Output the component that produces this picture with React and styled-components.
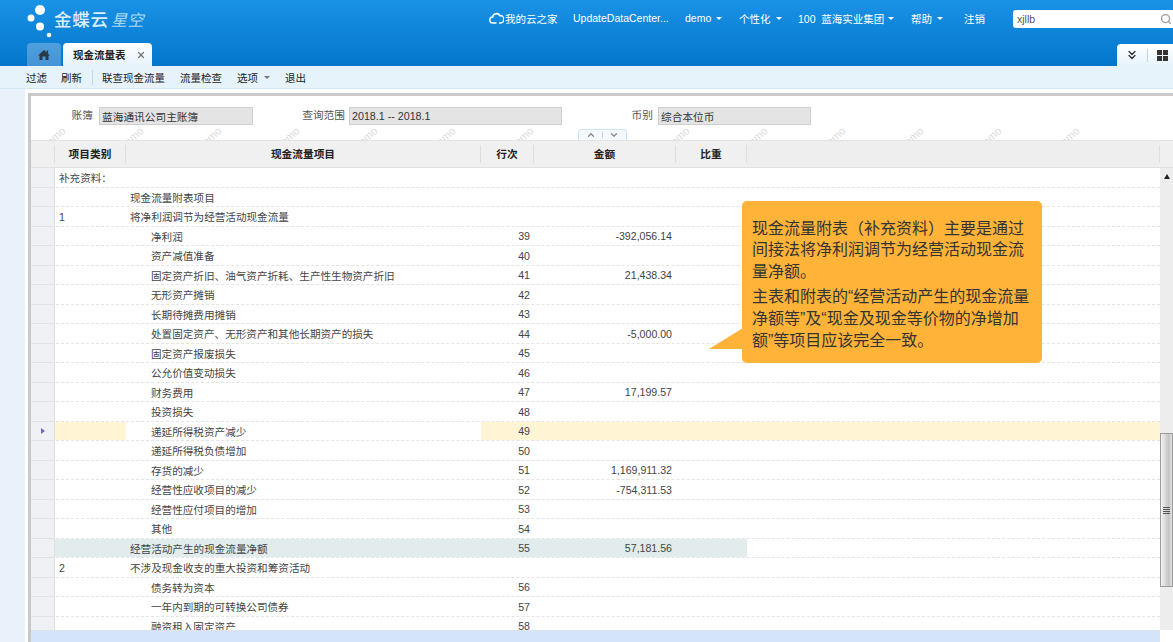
import React from "react";
import styled, { createGlobalStyle } from "styled-components";
import { X, Search, ChevronsDown, ChevronUp, ChevronDown } from "lucide-react";

const Global = createGlobalStyle`
  html, body { margin: 0; padding: 0; height: 100%; overflow: hidden; background: #fff; }
  #root { height: 642px; }
  * { box-sizing: border-box; }
`;
const FONT = `"Liberation Sans", "Noto Sans CJK SC", sans-serif`;
const Page = styled.div`
  width: 1173px; height: 642px; display: flex; flex-direction: column; overflow: hidden;
  font-family: ${FONT}; font-size: 10.5px; color: #333;
`;
const Header = styled.header`
  height: 66px; flex: none; display: flex; flex-direction: column;
  background: linear-gradient(#1a92e6, #0376cb);
`;
const TopBar = styled.div`
  height: 43px; display: flex; align-items: flex-start; padding: 0 0 0 27px;
`;
const Logo = styled.div`
  display: flex; align-items: flex-start; width: 462px;
`;
const LogoDotsSvg = styled.svg`
  flex: none; margin-right: -3px;
`;
const LogoText = styled.span`
  margin-top: 10px; font-size: 17.5px; line-height: 20px; font-weight: 500; color: #dceffb; letter-spacing: 0.8px; white-space: nowrap;
  i { font-weight: 400; font-size: 16px; color: #a9d8f5; margin-left: 2px; letter-spacing: 0.5px; }
`;
const Nav = styled.nav`
  display: flex; align-items: center; height: 36px; color: #fff; font-size: 10.5px; white-space: nowrap;
`;
const NavItem = styled.span`
  display: inline-flex; align-items: center; width: ${p => p.$w}px; flex: none;
`;
const Caret = styled.span`
  display: inline-block; margin-left: ${p => p.$m ?? 5}px; border: 3px solid transparent; border-top: 3.5px solid ${p => p.$c || "#fff"}; border-bottom: 0;
`;
const SearchBox = styled.div`
  width: 160px; height: 18px; margin-top: 10px; background: #fff; border-radius: 3px 0 0 3px;
  display: flex; align-items: center; justify-content: space-between; padding: 0 1px 0 4px;
  color: #555; font-size: 10.5px;
`;
const TabRow = styled.div`
  height: 23px; display: flex; align-items: flex-end; padding-left: 27px;
`;
const HomeTab = styled.div`
  width: 34px; height: 23px; background: linear-gradient(#4f9fdf, #4595d6); border-radius: 4px 4px 0 0; display: flex; align-items: center; justify-content: center; margin-right: 2px;
`;
const ActiveTab = styled.div`
  width: 89px; height: 23px; background: linear-gradient(#fff, #e6f3fb); border-radius: 4px 4px 0 0; display: flex; align-items: center; padding: 0 6px 0 10px; justify-content: space-between;
  font-weight: 700; font-size: 10.5px; color: #222;
`;
const TabTools = styled.div`
  margin-left: auto; width: 56px; height: 22px; background: linear-gradient(#fff, #e6f3fb); border-radius: 4px 0 0 0; display: flex; align-items: center; padding-left: 8px;
`;
const ToolDivider = styled.span`
  width: 1px; height: 13px; background: #c4d6e2; margin: 0 9px 0 8px;
`;
const Toolbar = styled.div`
  height: 23px; flex: none; background: #e6f3fb; border-bottom: 1px solid #d3e6f3; display: flex; align-items: center; padding-left: 26px; font-size: 10.5px; color: #222;
`;
const ToolItem = styled.span`
  display: inline-flex; align-items: center; margin-right: ${p => p.$mr}px; white-space: nowrap;
`;
const ToolSep = styled.span`
  width: 1px; height: 15px; background: #c5d8e6; margin-right: 9px;
`;
const Body = styled.div`
  flex: 1; min-height: 0; display: flex; background: #e9f2fa;
`;
const Rail = styled.div`
  width: 25px; flex: none;
`;
const Panel = styled.div`
  flex: 1; min-width: 0; background: #fff; padding: 4px 0 0 3px; display: flex; flex-direction: column;
`;
const PanelInner = styled.div`
  flex: 1; min-height: 0; display: flex; flex-direction: column; border-top: 3px solid #c9c9c9; border-left: 3px solid #c9c9c9; position: relative;
`;
const FormArea = styled.div`
  height: 44px; flex: none; position: relative;
`;
const Fields = styled.div`
  display: flex; padding-top: 11px; position: relative; z-index: 1;
`;
const FieldLabel = styled.div`
  display: flex; align-items: center; width: ${p => p.$w}px; flex: none; justify-content: flex-end; color: #555; font-size: 10.7px; padding-bottom: 3px;
`;
const FieldValue = styled.div`
  width: ${p => p.$w}px; height: 18px; margin-left: ${p => p.$ml}px; flex: none; background: #e4e4e4; border: 1px solid #cfcfcf; color: #333; padding: 0 3px 0 2px; display: flex; align-items: center; white-space: nowrap; font-size: 10.7px;
`;
const Mark = styled.span`
  position: absolute; top: 37px; left: ${p => p.$x}px; transform: rotate(-42deg); color: #dcdcdc; font-size: 11px; line-height: 11px;
`;
const Collapser = styled.div`
  position: absolute; left: 547px; top: 33px; width: 49px; height: 11px; border: 1px solid #cfe4f5; border-bottom: 0; border-radius: 4px 4px 0 0; background: #f3f9fd; display: flex; align-items: center; justify-content: center; z-index: 2;
`;
const CollapserSep = styled.span`
  width: 1px; height: 6px; background: #c9d3da; margin: 0 6px;
`;
const GridHead = styled.div`
  height: 28px; flex: none; display: flex; align-items: center; background: #f0f0f0; border-top: 1px solid #e3e3e3; border-bottom: 1px solid #e0e0e0; font-weight: 700; color: #222; font-size: 10.7px; position: relative; z-index: 1;
`;
const HeadCell = styled.div`
  width: ${p => p.$w}px; flex: none; height: 18px; text-align: center; line-height: 18px; border-right: 1px solid #dedede;
`;
const HeadFill = styled.div`
  flex: 1; height: 26px; background: #eeeeee;
`;
const HeadEnd = styled.div`
  width: 14px; flex: none; height: 18px; border-left: 1px solid #dedede;
`;
const GridBody = styled.div`
  flex: 1; min-height: 0; display: flex; position: relative; overflow: hidden;
`;
const RowArea = styled.div`
  flex: 1; min-width: 0; overflow: hidden;
`;
const Row = styled.div`
  height: 19.5px; display: flex; align-items: stretch; border-bottom: 1px dashed #e4e4e4; color: #444; font-size: 10.6px;
`;
const Gutter = styled.div`
  width: 24px; flex: none; background: #f0f1f4; border-right: 1px solid #dedede; border-bottom: 1px solid #e3e3e3; margin-bottom: -1px; display: flex; align-items: center; justify-content: center;
`;
const Cell = styled.div`
  flex: none; width: ${p => p.$w}px; display: flex; align-items: center; white-space: nowrap; padding-top: 1px;
  justify-content: ${p => (p.$right ? "flex-end" : "flex-start")};
  padding-right: ${p => (p.$right ? 4 : 0)}px;
  padding-left: ${p => (p.$right ? 0 : p.$pl || 4)}px;
  background: ${p => p.$bg || "transparent"};
`;
const Pointer = styled.span`
  border: 3px solid transparent; border-left: 4px solid #6d6db0; border-right: 0;
`;
const Scrollbar = styled.div`
  width: 13px; flex: none; background: #ededed; display: flex; flex-direction: column; align-items: stretch; position: relative;
`;
const ScrollUp = styled.span`
  align-self: center; margin-top: 6px; border: 3px solid transparent; border-bottom: 5px solid #222; border-top: 0;
`;
const Thumb = styled.div`
  position: absolute; left: 0; top: 265px; width: 13px; height: 154px; border: 1px solid #9b9b9b; background: linear-gradient(90deg, #f3f3f3, #c4c4c4 70%, #e2e2e2); display: flex; align-items: center; justify-content: center;
`;
const Grip = styled.span`
  width: 7px; height: 7px; background: repeating-linear-gradient(#555 0 1px, transparent 1px 2px);
`;
const Footer = styled.div`
  height: 12px; flex: none; background: #d4e4f9; border-top: 1px solid #dde3ea; margin-right: 13px;
`;
const Callout = styled.div`
  position: absolute; left: 711px; top: 33px; width: 300px; height: 162px; background: #ffb339; border-radius: 5px; padding: 16.5px 8px 0 10px; color: #333; font-size: 16px; line-height: 21.8px; z-index: 3;
  p { margin: 0 0 3.5px; }
  &::before { content: ""; position: absolute; left: -33px; top: 127px; width: 34px; height: 21px; background: #ffb339; clip-path: polygon(100% 0, 100% 100%, 0 100%); }
`;
const CloudSvg = styled.svg`
  margin-right: 1px; flex: none;
`;

const CloudIcon = () => (
  <CloudSvg width="15" height="14" viewBox="0 0 15 14" fill="none" stroke="#fff" strokeWidth="1.6">
    <path d="M7.5 12H4a3 3 0 0 1-.4-6A4 4 0 0 1 11 4.6 3.7 3.7 0 0 1 11.5 12H10" />
  </CloudSvg>
);
const LogoDots = () => (
  <LogoDotsSvg width="30" height="38" viewBox="0 0 30 38" fill="#fff" aria-hidden="true">
    <circle cx="13" cy="10" r="5" />
    <circle cx="4" cy="18" r="3.5" />
    <circle cx="13" cy="26.5" r="4" />
    <circle cx="22" cy="35" r="2.3" />
  </LogoDotsSvg>
);
const HomeIcon = () => (
  <svg width="12" height="12" viewBox="0 0 12 12" fill="#2b3a48">
    <path d="M6 1 12 6.5H10.5V11H7.5V7.5H4.5V11H1.5V6.5H0Z" />
    <rect x="8.6" y="1.5" width="1.5" height="3" />
  </svg>
);
const GridIcon = () => (
  <svg width="11" height="11" viewBox="0 0 11 11" fill="#333">
    <rect width="5" height="5" /><rect x="6" width="5" height="5" /><rect y="6" width="5" height="5" /><rect x="6" y="6" width="5" height="5" />
  </svg>
);

const rows = [
  { c: "补充资料：", i: 0, wide: true },
  { b: "现金流量附表项目", i: 1 },
  { a: "1", b: "将净利润调节为经营活动现金流量", i: 1 },
  { b: "净利润", i: 2, n: 39, v: "-392,056.14" },
  { b: "资产减值准备", i: 2, n: 40 },
  { b: "固定资产折旧、油气资产折耗、生产性生物资产折旧", i: 2, n: 41, v: "21,438.34" },
  { b: "无形资产摊销", i: 2, n: 42 },
  { b: "长期待摊费用摊销", i: 2, n: 43 },
  { b: "处置固定资产、无形资产和其他长期资产的损失", i: 2, n: 44, v: "-5,000.00" },
  { b: "固定资产报废损失", i: 2, n: 45 },
  { b: "公允价值变动损失", i: 2, n: 46 },
  { b: "财务费用", i: 2, n: 47, v: "17,199.57" },
  { b: "投资损失", i: 2, n: 48 },
  { b: "递延所得税资产减少", i: 2, n: 49, cur: true },
  { b: "递延所得税负债增加", i: 2, n: 50 },
  { b: "存货的减少", i: 2, n: 51, v: "1,169,911.32" },
  { b: "经营性应收项目的减少", i: 2, n: 52, v: "-754,311.53" },
  { b: "经营性应付项目的增加", i: 2, n: 53 },
  { b: "其他", i: 2, n: 54 },
  { b: "经营活动产生的现金流量净额", i: 1, n: 55, v: "57,181.56", total: true },
  { a: "2", b: "不涉及现金收支的重大投资和筹资活动", i: 1 },
  { b: "债务转为资本", i: 2, n: 56 },
  { b: "一年内到期的可转换公司债券", i: 2, n: 57 },
  { b: "融资租入固定资产", i: 2, n: 58 },
];
const marks = Array.from({ length: 14 }, (_, k) => 9 + 78 * k);

export default function App() {
  return (
    <Page>
      <Global />
      <Header>
        <TopBar>
          <Logo>
            <LogoDots />
            <LogoText>金蝶云<i>星空</i></LogoText>
          </Logo>
          <Nav>
            <NavItem $w={84}><CloudIcon />我的云之家</NavItem>
            <NavItem $w={112}>UpdateDataCenter...</NavItem>
            <NavItem $w={54}>demo<Caret /></NavItem>
            <NavItem $w={59}>个性化<Caret /></NavItem>
            <NavItem $w={113}>100&nbsp;&nbsp;蓝海实业集团<Caret $m={4} /></NavItem>
            <NavItem $w={53}>帮助<Caret /></NavItem>
            <NavItem $w={49}>注销</NavItem>
          </Nav>
          <SearchBox>xjllb<Search size={12} color="#9a9a9a" strokeWidth={2.5} /></SearchBox>
        </TopBar>
        <TabRow>
          <HomeTab><HomeIcon /></HomeTab>
          <ActiveTab>现金流量表<X size={10} color="#777" strokeWidth={3} /></ActiveTab>
          <TabTools>
            <ChevronsDown size={14} color="#333" strokeWidth={2.4} />
            <ToolDivider />
            <GridIcon />
          </TabTools>
        </TabRow>
      </Header>
      <Toolbar>
        <ToolItem $mr={14}>过滤</ToolItem>
        <ToolItem $mr={10}>刷新</ToolItem>
        <ToolSep />
        <ToolItem $mr={15}>联查现金流量</ToolItem>
        <ToolItem $mr={15}>流量检查</ToolItem>
        <ToolItem $mr={15}>选项<Caret $m={6} $c="#777" /></ToolItem>
        <ToolItem $mr={0}>退出</ToolItem>
      </Toolbar>
      <Body>
        <Rail />
        <Panel>
          <PanelInner>
            <FormArea>
              {marks.map(x => <Mark key={x} $x={x}>demo</Mark>)}
              <Fields>
                <FieldLabel $w={62}>账簿</FieldLabel>
                <FieldValue $w={154} $ml={6}>蓝海通讯公司主账簿</FieldValue>
                <FieldLabel $w={92}>查询范围</FieldLabel>
                <FieldValue $w={213} $ml={4}>2018.1 -- 2018.1</FieldValue>
                <FieldLabel $w={91}>币别</FieldLabel>
                <FieldValue $w={153} $ml={5}>综合本位币</FieldValue>
              </Fields>
              <Collapser>
                <ChevronUp size={10} color="#888" strokeWidth={3} />
                <CollapserSep />
                <ChevronDown size={10} color="#888" strokeWidth={3} />
              </Collapser>
            </FormArea>
            <GridHead>
              <HeadCell $w={24} />
              <HeadCell $w={71}>项目类别</HeadCell>
              <HeadCell $w={355}>现金流量项目</HeadCell>
              <HeadCell $w={53}>行次</HeadCell>
              <HeadCell $w={142}>金额</HeadCell>
              <HeadCell $w={71}>比重</HeadCell>
              <HeadFill />
              <HeadEnd />
            </GridHead>
            <GridBody>
              <RowArea>
                {rows.map((r, idx) => {
                  const hi = r.cur ? "#fff4d3" : r.total ? "#e2ecec" : undefined;
                  return (
                    <Row key={idx}>
                      <Gutter>{r.cur && <Pointer />}</Gutter>
                      <Cell $w={71} $bg={hi}>{r.wide ? r.c : r.a}</Cell>
                      <Cell $w={355} $pl={r.i === 2 ? 25 : 4} $bg={r.total ? hi : undefined}>{r.b}</Cell>
                      <Cell $w={53} $right $bg={hi}>{r.n}</Cell>
                      <Cell $w={142} $right $bg={hi}>{r.v}</Cell>
                      <Cell $w={71} $bg={hi} />
                      <Cell $w={413} $bg={r.cur ? hi : undefined} />
                    </Row>
                  );
                })}
              </RowArea>
              <Scrollbar>
                <ScrollUp />
                <Thumb><Grip /></Thumb>
              </Scrollbar>
              <Callout>
                <p>现金流量附表（补充资料）主要是通过间接法将净利润调节为经营活动现金流量净额。</p>
                <p>主表和附表的“经营活动产生的现金流量净额等”及“现金及现金等价物的净增加额”等项目应该完全一致。</p>
              </Callout>
            </GridBody>
            <Footer />
          </PanelInner>
        </Panel>
      </Body>
    </Page>
  );
}
